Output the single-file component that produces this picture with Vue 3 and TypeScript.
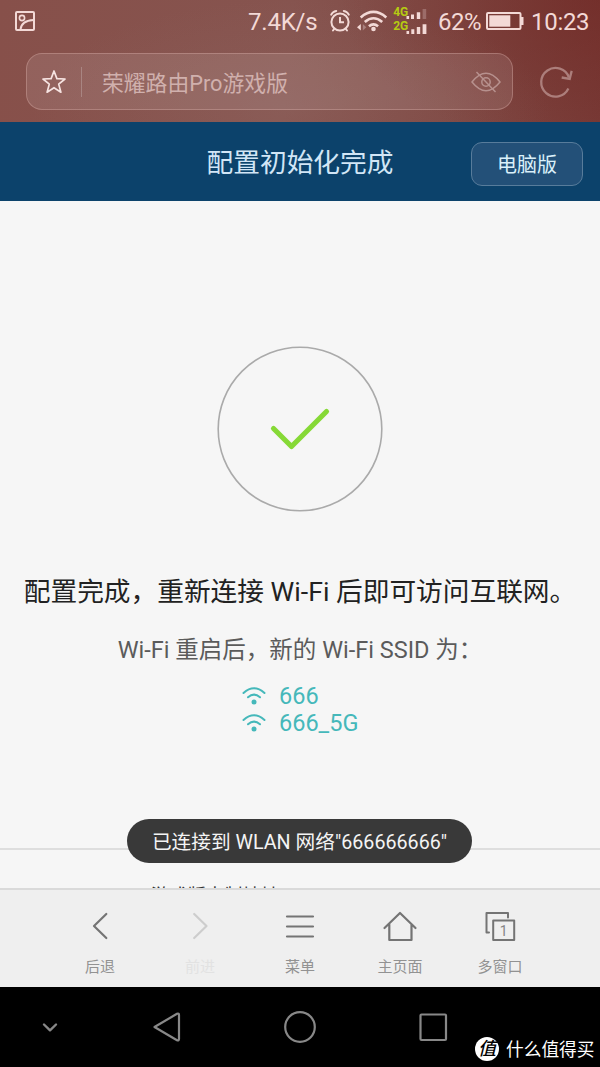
<script setup lang="ts">
interface Tab { key: string; label: string; disabled?: boolean }

const networks: string[] = ['666', '666_5G']
const tabs: Tab[] = [
  { key: 'back', label: '后退' },
  { key: 'forward', label: '前进', disabled: true },
  { key: 'menu', label: '菜单' },
  { key: 'home', label: '主页面' },
  { key: 'windows', label: '多窗口' },
]
</script>

<template>
  <div class="phone">
    <header class="top">
      <div class="status">
        <svg class="shot" width="22" height="22" viewBox="0 0 22 22" fill="none" stroke="#f3d9d6" stroke-width="2">
          <rect x="2" y="2" width="18" height="18" rx="1" />
          <circle cx="8" cy="8" r="2.6" stroke-width="1.6" />
          <path d="M6.5 19.500C7 14 12 10.500 19.500 10" />
        </svg>
        <span class="speed">7.4K/s</span>
        <svg class="indicators" width="100" height="40" viewBox="328 0 100 40" fill="none" stroke="#f3d9d6">
          <g stroke-width="2" stroke-linecap="round">
            <circle cx="340" cy="22" r="8.600" />
            <path d="M340 17v5.200h4" stroke-linecap="butt" />
            <path d="M331.200 14.600q1.500-3 5-3.700M343.800 10.900q3.500.7 5 3.700M334.500 28.500l-1.500 2M345.500 28.500l1.500 2" />
          </g>
          <g stroke-width="2.600">
            <path d="M360.700 17.400Q373.500 6.500 386.300 17.400" />
            <path d="M364.800 22Q373.500 14.500 382.200 22" />
            <path d="M368.900 26.300Q373.500 22.500 378.100 26.300" />
          </g>
          <circle cx="373.500" cy="29" r="2.300" fill="#f3d9d6" stroke="none" />
          <path d="M360.800 24v6.500l-3.800-3.200z" fill="#f3d9d6" stroke="none" />
          <path d="M362.800 24v6.500l3.500-3.200z" fill="#a9817e" stroke="none" />
          <g stroke="none" fill="#f3d9d6">
            <path d="M406.500 16h2.600v3H406.500zM411 14.600h3v4.400h-3zM416.800 12.200h3.400V19h-3.400z" />
            <path d="M422.600 9h3.600v10h-3.600z" fill="#9c6c69" />
            <path d="M406.500 31h2.600v3H406.500zM411.300 29.300h3V34h-3zM416.800 27h3.400v7h-3.400zM422.600 24.300h3.800V34h-3.800z" />
          </g>
          <g class="gen">
            <text x="393.200" y="15.500">4G</text>
            <text x="393.200" y="30.300">2G</text>
          </g>
        </svg>
        <span class="percent">62%</span>
        <svg class="battery" width="38" height="20" viewBox="0 0 38 20">
          <rect x="1" y="2" width="33.500" height="16" rx="1" fill="none" stroke="#f3d9d6" stroke-width="2" />
          <rect x="3.300" y="4.300" width="21" height="11.400" fill="#f3d9d6" />
          <path d="M35 6h2.500v8H35z" fill="#f3d9d6" />
        </svg>
        <span class="clock">10:23</span>
      </div>
      <div class="address-row">
        <div class="address">
          <svg class="star" width="26" height="26" viewBox="0 0 26 26" fill="none" stroke="#f6e3e1" stroke-width="1.700" stroke-linejoin="round">
            <path d="M13 2l2.900 7.600 8.100.4-6.300 5.100 2.200 8.100L13 18.700l-6.900 4.500 2.200-8.100L2 10l8.100-.4z" />
          </svg>
          <i class="divider"></i>
          <span class="title">荣耀路由Pro游戏版</span>
          <svg class="eye" width="30" height="22" viewBox="0 0 30 22" fill="none" stroke="#b7918e" stroke-width="1.500">
            <path d="M1 11Q15-6.500 29 11Q15 28.500 1 11z" />
            <circle cx="15" cy="11" r="4.200" />
            <path d="M5.500 1L24.500 21" />
          </svg>
        </div>
        <svg class="reload" width="36" height="36" viewBox="0 0 36 36" fill="none" stroke="#ac7e7b" stroke-width="2.300">
          <path d="M30.400 24.500A14.300 14.300 0 1 1 31 13.500" />
          <path d="M23.700 13.500l8 1.400 2-8" />
        </svg>
      </div>
    </header>

    <div class="banner">
      <h1>配置初始化完成</h1>
      <button class="desktop">电脑版</button>
    </div>

    <main class="page">
      <svg class="done" width="166" height="166" viewBox="0 0 166 166" fill="none">
        <circle cx="83" cy="83" r="81.800" stroke="#aaa" stroke-width="1.600" />
        <path d="M56.500 82.500L74.500 100.500L109.500 65.500" stroke="#86d936" stroke-width="5.200" stroke-linecap="round" stroke-linejoin="round" />
      </svg>
      <p class="headline">配置完成，重新连接 Wi-Fi 后即可访问互联网。</p>
      <p class="sub">Wi-Fi 重启后，新的 Wi-Fi SSID 为：</p>
      <ul class="networks">
        <li v-for="name in networks" :key="name">
          <svg width="24" height="20" viewBox="0 0 24 20" fill="none" stroke="#45b8ba" stroke-width="2" stroke-linecap="round">
            <path d="M1.500 7Q12-2.500 22.500 7" />
            <path d="M6 11.300Q12 6 18 11.300" />
            <circle cx="12" cy="16" r="2.500" fill="#45b8ba" stroke="none" />
          </svg>
          <span>{{ name }}</span>
        </li>
      </ul>
      <div class="rule"></div>
      <p class="more">游戏版本制地址</p>
      <div class="toast">已连接到 WLAN 网络"666666666"</div>
    </main>

    <nav class="tabs">
      <div v-for="tab in tabs" :key="tab.key" class="tab" :class="{ disabled: tab.disabled }">
        <svg width="40" height="34" viewBox="0 0 40 34" fill="none" stroke="currentColor" stroke-width="2.200" stroke-linecap="round" stroke-linejoin="round">
          <path v-if="tab.key === 'back'" d="M26.300 5L14 17L26.300 29" />
          <path v-else-if="tab.key === 'forward'" d="M14.200 5L26.500 17L14.200 29" />
          <path v-else-if="tab.key === 'menu'" d="M7 7.500h26M7 17.500h26M7 27.500h26" />
          <path v-else-if="tab.key === 'home'" d="M4.500 19L20 4L35.500 19M9.300 15.500V31H31.500V15.500" />
          <g v-else stroke-width="2">
            <path d="M9 23.500H6.500V4H28V8.500" />
            <rect x="13.200" y="11.500" width="21" height="19.500" />
            <text class="count" x="23.800" y="27">1</text>
          </g>
        </svg>
        <span>{{ tab.label }}</span>
      </div>
    </nav>

    <footer class="system">
      <svg width="600" height="80" viewBox="0 0 600 80" fill="none" stroke="#888" stroke-width="2.200" stroke-linejoin="round" stroke-linecap="round">
        <path d="M44 37.500l6 5.800 6-5.800" stroke-width="2.400" />
        <path d="M154.500 40L177 26.800q2-.8 2 1.200v24q0 2-2 1.200z" />
        <circle cx="300" cy="40" r="14.800" />
        <rect x="420.500" y="27.500" width="25.500" height="25.500" rx="1" />
      </svg>
      <div class="watermark">
        <span class="badge">值</span>
        <span class="brand">什么值得买</span>
      </div>
    </footer>
  </div>
</template>

<style>
body { margin: 0; }
</style>

<style scoped>
.phone {
  width: 600px;
  height: 1067px;
  display: flex;
  flex-direction: column;
  overflow: hidden;
  background: #f6f6f6;
  font-family: Roboto, "Noto Sans CJK SC", sans-serif;
}
.phone svg { flex: none; display: block; }
.top {
  height: 122px;
  flex: none;
  background:
    radial-gradient(ellipse 260px 110px at 290px 110px, rgba(145, 106, 101, .35), transparent),
    radial-gradient(ellipse 260px 150px at 600px 0, rgba(112, 38, 34, .55), transparent),
    linear-gradient(95deg, #87504a 0%, #86544f 48%, #7f4843 76%, #783a36 100%);
}
.status {
  height: 44px;
  display: flex;
  align-items: center;
  color: #f3d9d6;
  font-size: 24px;
  white-space: nowrap;
}
.shot { margin: -2px 0 0 14px; }
.speed { width: 79px; margin-left: 212px; letter-spacing: -.2px; }
.indicators { margin-top: -4px; margin-left: 1px; }
.gen text {
  font: bold 12px Roboto, sans-serif;
  fill: #b5cb12;
  stroke: none;
}
.percent { width: 48px; margin-left: 10px; letter-spacing: -.5px; }
.battery { margin-top: -2px; }
.clock { margin-left: 7px; letter-spacing: -.3px; }
.address-row {
  display: flex;
  align-items: center;
  padding: 9px 0 0 26px;
}
.address {
  width: 487px;
  height: 57px;
  box-sizing: border-box;
  display: flex;
  align-items: center;
  border: 1px solid rgba(220, 175, 170, .38);
  border-radius: 16px;
  background: rgba(255, 255, 255, .1);
}
.star { margin-left: 14px; }
.divider { width: 1px; height: 30px; margin-left: 14px; background: #a98582; }
.title { flex: 1; margin-left: 20px; font-size: 21.800px; color: #d0b0ad; }
.eye { margin-right: 11px; }
.reload { margin-left: 25px; }
.banner {
  height: 79px;
  flex: none;
  display: grid;
  grid-template-columns: 1fr auto 1fr;
  align-items: center;
  background: #0c426b;
}
h1 {
  grid-column: 2;
  margin: -3px 0 0;
  font-size: 26.700px;
  font-weight: 400;
  color: #d2e6f6;
}
.desktop {
  justify-self: end;
  width: 112px;
  height: 44px;
  margin: 4px 17px 0 0;
  padding: 0 0 1px;
  border: 1px solid #587c9b;
  border-radius: 11px;
  background: #235078;
  color: #daf0fa;
  font: 20px Roboto, "Noto Sans CJK SC", sans-serif;
}
.page {
  position: relative;
  height: 687px;
  flex: none;
  overflow: hidden;
  display: flex;
  flex-direction: column;
  align-items: center;
}
.page p { flex: none; margin: 0; white-space: nowrap; }
.page .done { margin-top: 144.500px; }
.page .headline { margin-top: 60px; line-height: 40px; font-size: 26.700px; color: #222; }
.page .sub { margin-top: 20.500px; line-height: 36px; font-size: 23.500px; color: #5b5b5b; }
.networks {
  flex: none;
  align-self: flex-start;
  margin: 14px 0 0 242px;
  padding: 0;
  list-style: none;
}
.networks li {
  height: 27.500px;
  display: flex;
  align-items: center;
  gap: 13px;
  color: #45b8ba;
  font-size: 23.500px;
}
.rule { flex: none; width: 100%; height: 2px; margin-top: 111px; background: #dedede; }
.page .more {
  align-self: flex-start;
  padding-left: 151px;
  margin-top: 33px;
  font-size: 18.300px;
  line-height: 26px;
  color: #333;
}
.toast {
  position: absolute;
  left: 127px;
  top: 618px;
  width: 345px;
  height: 44px;
  border-radius: 22px;
  background: #393939;
  color: #f4f4f4;
  font-size: 19.700px;
  line-height: 47px;
  text-align: center;
  white-space: nowrap;
}
.tabs {
  height: 99px;
  box-sizing: border-box;
  flex: none;
  display: flex;
  padding: 0 50px;
  border-top: 2px solid #dadada;
  background: #efefef;
}
.tab {
  width: 100px;
  display: flex;
  flex-direction: column;
  align-items: center;
  padding-top: 19px;
  color: #747474;
}
.tab span { margin-top: 13px; font-size: 15px; line-height: 22px; color: #929292; }
.tab.disabled { color: #cdcdcd; }
.tab.disabled span { color: #e2e2e2; }
.count { font: 14px Roboto, sans-serif; text-anchor: middle; fill: #858585; stroke: none; }
.system { position: relative; height: 80px; flex: none; background: #000; }
.watermark {
  position: absolute;
  left: 475px;
  top: 50px;
  display: flex;
  align-items: center;
  gap: 7px;
  height: 24px;
  color: #fff;
  font-size: 17.700px;
  white-space: nowrap;
}
.brand { margin-top: -2px; }
.badge {
  width: 24px;
  height: 24px;
  border-radius: 50%;
  background: #fff;
  color: #000;
  font-size: 18px;
  font-style: italic;
  font-weight: 500;
  line-height: 23px;
  text-align: center;
}
</style>
